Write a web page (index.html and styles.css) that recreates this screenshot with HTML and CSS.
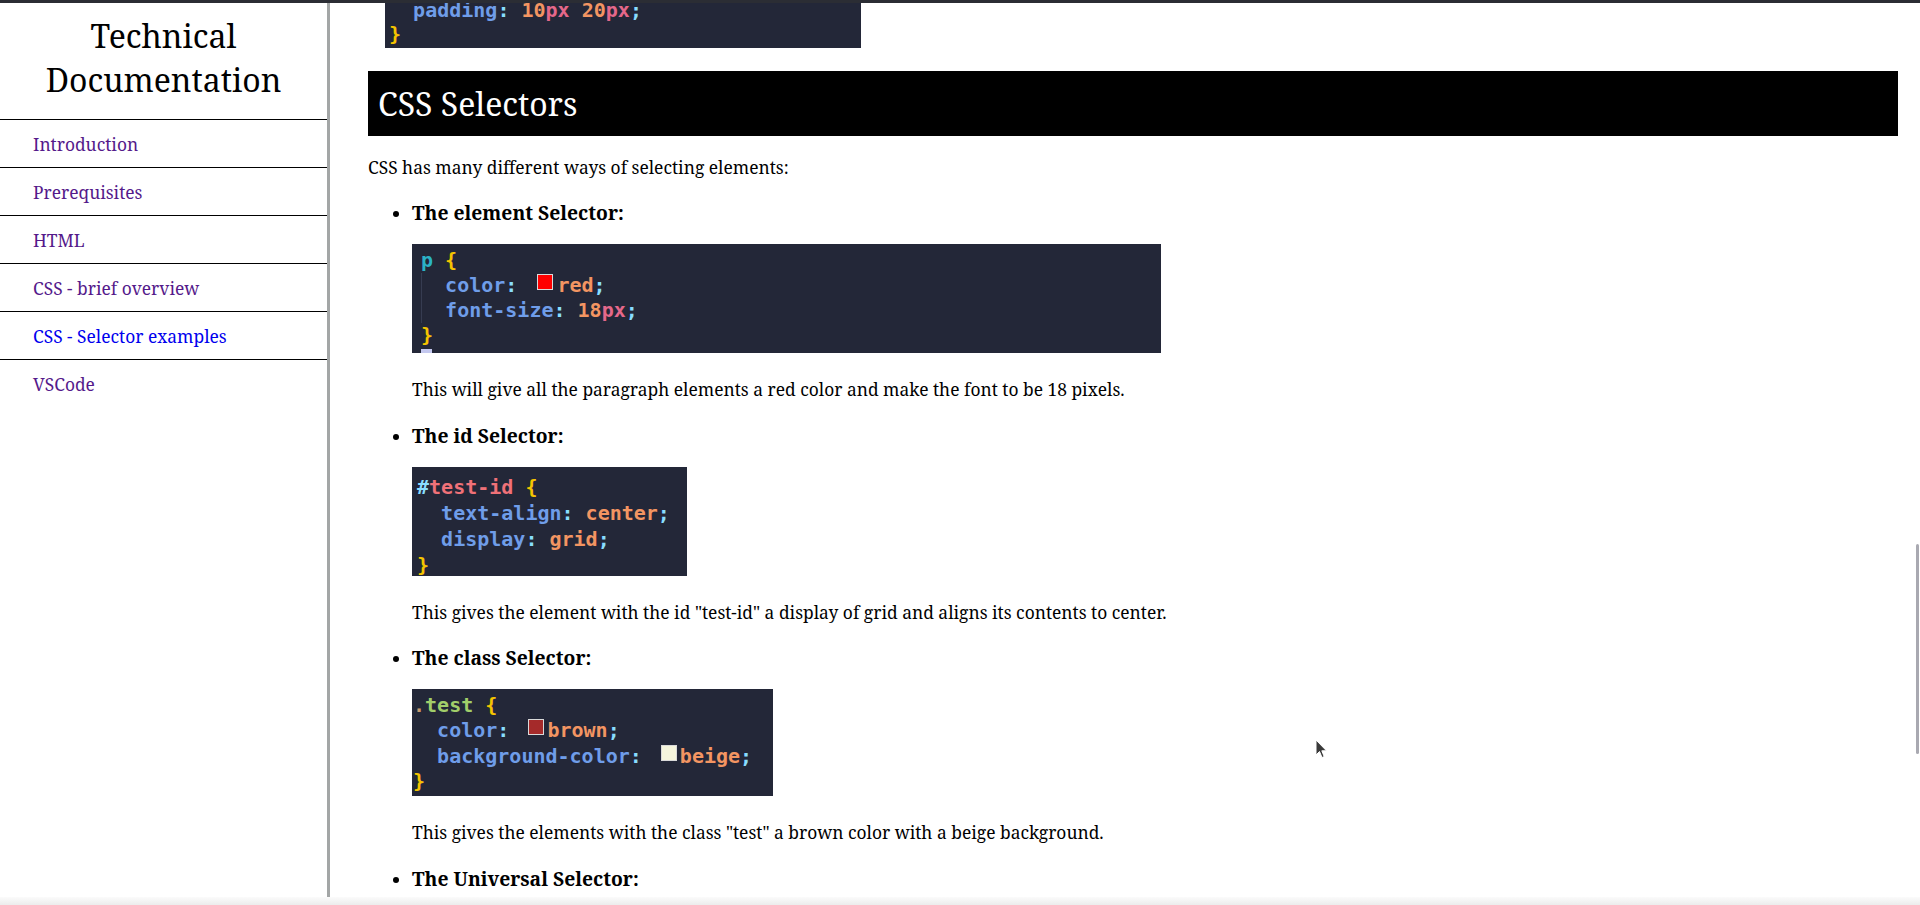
FILE: index.html
```html
<!DOCTYPE html>
<html lang="en">
<head>
<meta charset="utf-8">
<title>Technical Documentation</title>
<link rel="stylesheet" href="styles.css">
</head>
<body>
<div class="topbar"></div>
<div class="layout">
  <nav class="sidebar" id="navbar">
    <header class="nav-header"><h1 class="nav-title">Technical Documentation</h1></header>
    <ul class="nav-list">
      <li class="nav-item"><a class="nav-link" href="#Introduction">Introduction</a></li>
      <li class="nav-item"><a class="nav-link" href="#Prerequisites">Prerequisites</a></li>
      <li class="nav-item"><a class="nav-link" href="#HTML">HTML</a></li>
      <li class="nav-item"><a class="nav-link" href="#CSS_-_brief_overview">CSS - brief overview</a></li>
      <li class="nav-item"><a class="nav-link nav-link-new" href="#CSS_-_Selector_examples">CSS - Selector examples</a></li>
      <li class="nav-item"><a class="nav-link" href="#VSCode">VSCode</a></li>
    </ul>
  </nav>
  <main class="main" id="main-doc">
    <div class="content">
      <div class="code code-top">
        <div class="code-lines code-lines-top">
          <div class="ln">  <span class="t-prop">padding</span><span class="t-punc">:</span> <span class="t-num">10</span><span class="t-unit">px</span> <span class="t-num">20</span><span class="t-unit">px</span><span class="t-punc">;</span></div>
          <div class="ln"><span class="t-brace">}</span></div>
        </div>
      </div>

      <section class="main-section" id="CSS_-_Selector_examples">
        <h2 class="section-title">CSS Selectors</h2>
        <p class="intro">CSS has many different ways of selecting elements:</p>
        <ul class="selector-list">
          <li class="selector-item">
            <strong class="sel-title">The element Selector:</strong>
            <div class="code code-element">
              <div class="code-lines">
                <div class="ln"><span class="t-tag">p</span> <span class="t-brace">{</span></div>
                <div class="guide">
                  <div class="ln">  <span class="t-prop">color</span><span class="t-punc">:</span> <span class="swatch swatch-red"></span><span class="t-num">red</span><span class="t-punc">;</span></div>
                  <div class="ln">  <span class="t-prop">font-size</span><span class="t-punc">:</span> <span class="t-num">18</span><span class="t-unit">px</span><span class="t-punc">;</span></div>
                </div>
                <div class="ln"><span class="t-brace">}</span></div>
              </div>
              <div class="cursor"></div>
            </div>
            <p class="sel-desc">This will give all the paragraph elements a red color and make the font to be 18 pixels.</p>
          </li>
          <li class="selector-item">
            <strong class="sel-title">The id Selector:</strong>
            <div class="code code-id">
              <div class="code-lines code-lines-id">
                <div class="ln"><span class="t-punc">#</span><span class="t-id">test-id</span> <span class="t-brace">{</span></div>
                <div class="ln">  <span class="t-prop">text-align</span><span class="t-punc">:</span> <span class="t-num">center</span><span class="t-punc">;</span></div>
                <div class="ln">  <span class="t-prop">display</span><span class="t-punc">:</span> <span class="t-num">grid</span><span class="t-punc">;</span></div>
                <div class="ln"><span class="t-brace">}</span></div>
              </div>
            </div>
            <p class="sel-desc">This gives the element with the id "test-id" a display of grid and aligns its contents to center.</p>
          </li>
          <li class="selector-item">
            <strong class="sel-title">The class Selector:</strong>
            <div class="code code-class">
              <div class="code-lines code-lines-class">
                <div class="ln"><span class="t-dot">.</span><span class="t-class">test</span> <span class="t-brace">{</span></div>
                <div class="ln">  <span class="t-prop">color</span><span class="t-punc">:</span> <span class="swatch swatch-brown"></span><span class="t-num">brown</span><span class="t-punc">;</span></div>
                <div class="ln">  <span class="t-prop">background-color</span><span class="t-punc">:</span> <span class="swatch swatch-beige"></span><span class="t-num">beige</span><span class="t-punc">;</span></div>
                <div class="ln"><span class="t-brace">}</span></div>
              </div>
            </div>
            <p class="sel-desc">This gives the elements with the class "test" a brown color with a beige background.</p>
          </li>
          <li class="selector-item">
            <strong class="sel-title">The Universal Selector:</strong>
          </li>
        </ul>
      </section>
    </div>
  </main>
</div>
<div class="scroll-thumb"></div>
<div class="bottom-band"></div>
<svg class="mouse" width="13" height="20" viewBox="0 0 13 20" aria-hidden="true">
  <path d="M1 1 L1 16 L4.5 12.5 L7 18.5 L9.2 17.6 L6.8 11.8 L11.5 11.8 Z" fill="#3a3a3a" stroke="#ffffff" stroke-width="1"/>
</svg>
</body>
</html>
```

FILE: styles.css
```css
html, body {
  margin: 0;
  padding: 0;
}

body {
  font-family: "Noto Serif", "DejaVu Serif", serif;
  font-size: 17.4px;
  color: #000;
  background: #fff;
  overflow: hidden;
  height: 905px;
}

.topbar {
  height: 3px;
  background: #2b2d34;
}

.layout {
  display: flex;
  height: 902px;
}

/* Sidebar */
.sidebar {
  width: 327px;
  flex: none;
  border-right: 3px solid #a3a6a6;
}

.nav-header {
  padding: 11px 0 18px;
}

.nav-title {
  margin: 0;
  font-size: 32px;
  font-weight: normal;
  line-height: 43.5px;
  text-align: center;
}

.nav-list {
  list-style: none;
  margin: 0;
  padding: 0;
}

.nav-item {
  border-top: 1px solid #000;
  padding: 12.5px 0 12.5px 33px;
  line-height: 22px;
}

.nav-link {
  color: #551a8b;
  text-decoration: none;
}

.nav-link-new {
  color: #0000ee;
}

/* Main */
.main {
  flex: 1;
  min-width: 0;
  padding-left: 38px;
  overflow: hidden;
}

.content {
  width: 1530px;
}

.code {
  background: #232738;
  font-family: "DejaVu Sans Mono", monospace;
  font-size: 20px;
  font-weight: bold;
  box-sizing: border-box;
  overflow: hidden;
}

.ln {
  white-space: pre;
}

.code-top {
  margin-left: 17px;
  width: 476px;
  height: 45px;
  padding-left: 4px;
}

.code-lines-top {
  margin-top: -5.5px;
  line-height: 24px;
}

.code-element {
  width: 749px;
  height: 109px;
  padding: 3.5px 0 0 9px;
  line-height: 25px;
  display: flex;
  flex-direction: column;
}

.guide {
  box-shadow: inset 1px 0 0 #363c51;
}

.cursor {
  margin-top: auto;
  width: 11px;
  height: 4px;
  background: #c4c8ef;
}

.code-id {
  width: 275px;
  height: 109px;
  padding: 7px 0 0 5px;
  line-height: 26px;
}

.code-class {
  width: 361px;
  height: 107px;
  padding: 3.5px 0 0 1px;
  line-height: 25.5px;
}

.t-prop { color: #6f9de9; }
.t-punc { color: #89ddff; }
.t-num { color: #f39562; }
.t-unit { color: #e5688a; }
.t-brace { color: #f5c400; }
.t-tag { color: #2bb3c6; }
.t-id { color: #f07178; }
.t-dot { color: #c89b6d; }
.t-class { color: #a1ce6a; }

.swatch {
  display: inline-block;
  width: 14px;
  height: 14px;
  border: 1px solid #d9d9d9;
  vertical-align: 2px;
  margin: 0 4px 0 8px;
}

.code-class .swatch {
  margin: 0 3px 0 7px;
}

.swatch-red { background: #ff0000; }
.swatch-brown { background: #a52a2a; }
.swatch-beige { background: #f5f5dc; }

.section-title {
  margin: 23px 0 0;
  background: #000;
  color: #fff;
  font-size: 32px;
  font-weight: normal;
  line-height: 43px;
  padding: 11px 10px;
}

.intro {
  margin: 20px 0 0;
  line-height: 22px;
}

.selector-list {
  margin: 24px 0 0;
  padding-left: 44px;
  line-height: 22px;
}

.selector-item + .selector-item {
  margin-top: 24.5px;
}

.sel-title {
  display: block;
  font-size: 19.3px;
  font-weight: bold;
  line-height: 22px;
  margin-bottom: 20px;
}

.sel-desc {
  margin: 25px 0 0;
  line-height: 22px;
}

/* Overlays */
.scroll-thumb {
  position: fixed;
  right: 1px;
  top: 544px;
  width: 3px;
  height: 210px;
  border-radius: 2px;
  background: #a9a9b1;
}

.bottom-band {
  position: fixed;
  left: 0;
  right: 0;
  bottom: 0;
  height: 8px;
  background: linear-gradient(#fbfbfb, #ececec);
}

.mouse {
  position: fixed;
  left: 1315px;
  top: 739px;
}
```
